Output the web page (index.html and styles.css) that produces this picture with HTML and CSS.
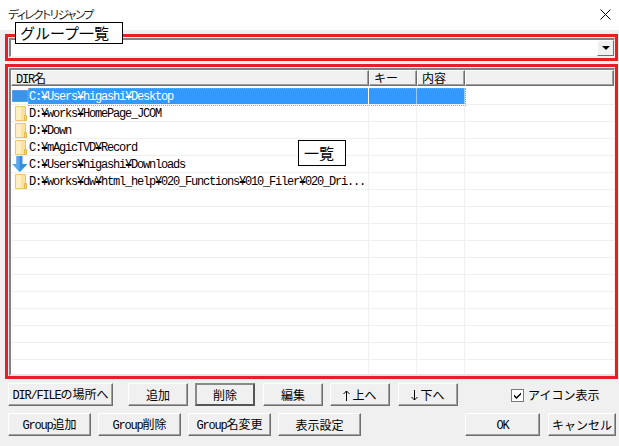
FILE: index.html
```html
<!DOCTYPE html>
<html lang="ja">
<head>
<meta charset="utf-8">
<title>ディレクトリジャンプ</title>
<link rel="stylesheet" href="styles.css">
</head>
<body>
<div class="dialog">
  <header class="titlebar">
    <span class="title">ディレクトリジャンプ</span>
    <svg class="close" width="11" height="11" viewBox="0 0 11 11"><path d="M.5.5l10 10M10.500.5l-10 10" stroke="#000" fill="none"/></svg>
  </header>
  <main class="content">
    <section class="redbox combo-box">
      <div class="combo">
        <span class="combo-btn"><i class="arrow"></i></span>
      </div>
    </section>
    <section class="redbox list-box">
      <div class="list">
        <div class="row head">
          <div class="cell c1"><span class="m">DIR</span>名</div>
          <div class="cell c2">キー</div>
          <div class="cell c3">内容</div>
          <div class="cell c4"></div>
        </div>
        <div class="rows">
          <div class="row selected">
            <div class="cell c1"><svg class="ico" width="16" height="16" viewBox="0 0 16 16"><rect x=".5" y="2.500" width="15" height="11" fill="#3a93ef" stroke="#1d6fd0" stroke-dasharray="1 1"/></svg><span class="path">C:¥Users¥higashi¥Desktop</span></div>
            <div class="cell c2"></div><div class="cell c3"></div><div class="cell c4"></div>
          </div>
          <div class="row">
            <div class="cell c1"><svg class="ico" width="16" height="16" viewBox="0 0 16 16"><use href="#folder"/></svg><span class="path">D:¥works¥HomePage_JCOM</span></div>
            <div class="cell c2"></div><div class="cell c3"></div><div class="cell c4"></div>
          </div>
          <div class="row">
            <div class="cell c1"><svg class="ico" width="16" height="16" viewBox="0 0 16 16"><use href="#folder"/></svg><span class="path">D:¥Down</span></div>
            <div class="cell c2"></div><div class="cell c3"></div><div class="cell c4"></div>
          </div>
          <div class="row">
            <div class="cell c1"><svg class="ico" width="16" height="16" viewBox="0 0 16 16"><use href="#folder"/></svg><span class="path">C:¥mAgicTVD¥Record</span></div>
            <div class="cell c2"></div><div class="cell c3"></div><div class="cell c4"></div>
          </div>
          <div class="row">
            <div class="cell c1"><svg class="ico" width="16" height="16" viewBox="0 0 16 16"><path d="M4.500 0h6v8H15.500L8 16 .5 8h4z" fill="#3a8fdc"/><path d="M4.500 0h3v16L.5 8h4z" fill="#5aa9ec"/></svg><span class="path">C:¥Users¥higashi¥Downloads</span></div>
            <div class="cell c2"></div><div class="cell c3"></div><div class="cell c4"></div>
          </div>
          <div class="row">
            <div class="cell c1"><svg class="ico" width="16" height="16" viewBox="0 0 16 16"><use href="#folder"/></svg><span class="path">D:¥works¥dw¥html_help¥020_Functions¥010_Filer¥020_Dri...</span></div>
            <div class="cell c2"></div><div class="cell c3"></div><div class="cell c4"></div>
          </div>
          <div class="row"><div class="cell c1"></div><div class="cell c2"></div><div class="cell c3"></div><div class="cell c4"></div></div>
          <div class="row"><div class="cell c1"></div><div class="cell c2"></div><div class="cell c3"></div><div class="cell c4"></div></div>
          <div class="row"><div class="cell c1"></div><div class="cell c2"></div><div class="cell c3"></div><div class="cell c4"></div></div>
          <div class="row"><div class="cell c1"></div><div class="cell c2"></div><div class="cell c3"></div><div class="cell c4"></div></div>
          <div class="row"><div class="cell c1"></div><div class="cell c2"></div><div class="cell c3"></div><div class="cell c4"></div></div>
          <div class="row"><div class="cell c1"></div><div class="cell c2"></div><div class="cell c3"></div><div class="cell c4"></div></div>
          <div class="row"><div class="cell c1"></div><div class="cell c2"></div><div class="cell c3"></div><div class="cell c4"></div></div>
          <div class="row"><div class="cell c1"></div><div class="cell c2"></div><div class="cell c3"></div><div class="cell c4"></div></div>
          <div class="row"><div class="cell c1"></div><div class="cell c2"></div><div class="cell c3"></div><div class="cell c4"></div></div>
          <div class="row"><div class="cell c1"></div><div class="cell c2"></div><div class="cell c3"></div><div class="cell c4"></div></div>
          <div class="row short"><div class="cell c1"></div><div class="cell c2"></div><div class="cell c3"></div><div class="cell c4"></div></div>
        </div>
      </div>
      <span class="note note-list">一覧</span>
    </section>
    <span class="note note-group">グループ一覧</span>
    <div class="btn-row first">
      <button class="btn b1"><span class="m">DIR/FILE</span>の場所へ</button>
      <button class="btn b2">追加</button>
      <button class="btn b2 default">削除</button>
      <button class="btn b2">編集</button>
      <button class="btn b2"><svg class="ar" width="7" height="11" viewBox="0 0 7 11"><path d="M3.500 11V1M.5 4l3-3 3 3" stroke="#000" fill="none"/></svg>上へ</button>
      <button class="btn b2"><svg class="ar" width="7" height="11" viewBox="0 0 7 11"><path d="M3.500 0v10M.5 7l3 3 3-3" stroke="#000" fill="none"/></svg>下へ</button>
      <label class="check"><span class="box"><svg width="9" height="9" viewBox="0 0 9 9"><path d="M1 3.500l2.500 2.500L8 1.500v2L3.500 8 1 5.500z" fill="#000"/></svg></span>アイコン表示</label>
    </div>
    <div class="btn-row second">
      <button class="btn b3"><span class="m">Group</span>追加</button>
      <button class="btn b3"><span class="m">Group</span>削除</button>
      <button class="btn b3"><span class="m">Group</span>名変更</button>
      <button class="btn b3 b3-last">表示設定</button>
      <button class="btn ok"><span class="m">OK</span></button>
      <button class="btn cancel">キャンセル</button>
    </div>
  </main>
</div>
<svg class="defs" width="0" height="0">
  <symbol id="folder" viewBox="0 0 16 16">
    <path d="M3.500 1.500h10v14h-10z" fill="#fce29a" stroke="#e8c76e"/>
    <path d="M4 2h5v13H4z" fill="#fff0c4"/>
    <path d="M12.500 10.500h2v5h-2z" fill="#fcd772" stroke="#e3b94f"/>
  </symbol>
</svg>
</body>
</html>
```
FILE: styles.css
```css
* { box-sizing: border-box; }
html, body { margin: 0; padding: 0; }
body {
  width: 619px;
  height: 446px;
  overflow: hidden;
  background: #f0f0f0;
  font: 12px/16px "Noto Sans CJK JP", sans-serif;
  color: #000;
}
.dialog { display: flex; flex-direction: column; height: 446px; }
.titlebar {
  height: 30px;
  flex: none;
  background: #fff;
  display: flex;
  justify-content: space-between;
  align-items: flex-start;
  padding: 6px 8px 0 8px;
}
.title { font-size: 11.5px; line-height: 16px; color: #222; font-feature-settings: "palt"; letter-spacing: -1.3px; }
.close { margin-top: 3px; }
.content { position: relative; padding: 4px 1px 0 5px; flex: 1; }
.redbox { border: 3px solid #ed1c24; }
.combo-box { height: 27px; padding: 1px 0 1px 1px; }
.combo {
  height: 19px;
  background: #fff;
  border-style: solid;
  border-width: 2px 1px 1px 2px;
  border-color: #828282 #f0f0f0 #f0f0f0 #828282;
  display: flex;
  justify-content: flex-end;
}
.combo-btn {
  width: 17px;
  background: #f0f0f0;
  border: 1px solid;
  border-color: #fff #6e6e6e #6e6e6e #fff;
  display: flex;
  align-items: center;
  justify-content: center;
}
.arrow {
  width: 0;
  height: 0;
  border: 4px solid transparent;
  border-top: 4px solid #000;
  border-bottom: 0;
}
.list-box { position: relative; margin-top: 3px; height: 315px; padding: 1px 0 0 1px; }
.list {
  height: 308px;
  background: #fff;
  border: 2px solid #828282;
  border-right: 1px solid #f0f0f0;
  border-bottom-color: #e4e4e4;
  overflow: hidden;
}
.row { display: flex; height: 17px; border-bottom: 1px solid #f0f0f0; }
.row.short { height: 14px; border-bottom: 0; }
.cell { border-right: 1px solid #f0f0f0; height: 100%; }
.c1 { width: 358px; display: flex; align-items: center; white-space: nowrap; }
.c2, .c3 { width: 48px; }
.c4 { flex: 1; border-right: 0; }
.head {
  height: 16px;
  margin-bottom: 2px;
  background: #f0f0f0;
  border-bottom: 0;
}
.head .cell {
  border: 1px solid;
  border-color: #fff #6e6e6e #6e6e6e #fff;
  box-shadow: inset -1px -1px 0 #a0a0a0;
  padding: 0 4px;
  line-height: 14px;
}
.head .c1 { display: block; }
.m { font-family: "Liberation Mono", monospace; letter-spacing: -1.2px; }
.ar { margin-right: 2px; vertical-align: -1px; }
.ico { margin: 0 1px; flex: none; }
.path {
  font-family: "Liberation Mono", monospace;
  letter-spacing: -1.2px;
  line-height: 15px;
  margin-top: 2px;
}
.selected { position: relative; }
.selected .c2, .selected .c3 { background: #3399ff; border-right-color: #ffffff80; }
.selected .c1 { background: linear-gradient(to right, transparent 17px, #3399ff 17px); border-right-color: #ffffff80; }
.selected::after {
  content: "";
  position: absolute;
  left: 17px;
  top: 0;
  width: 436px;
  height: 16px;
  border: 1px dotted #e8963c;
}
.selected .path { color: #fff; }
.note {
  position: absolute;
  background: #fff;
  border: 1px solid #000;
  font-size: 15px;
  line-height: 19px;
  white-space: nowrap;
}
.note-group { left: 15px; top: -8px; width: 108px; height: 22px; padding: 0 0 0 4px; }
.note-list { left: 290px; top: 73px; width: 48px; height: 26px; padding: 2px 5px; }
.btn-row { display: flex; align-items: flex-start; padding-left: 3px; }
.first { margin-top: 4px; height: 23px; }
.second { margin-top: 7px; }
.btn {
  height: 23px;
  background: #f0f0f0;
  border: 1px solid;
  border-color: #fff #6e6e6e #6e6e6e #fff;
  box-shadow: inset -1px -1px 0 #a0a0a0;
  font: inherit;
  color: #000;
  padding: 0;
  text-align: center;
  white-space: nowrap;
}
.b1 { width: 105px; margin-right: 15px; }
.b2 { width: 60px; margin-right: 7px; }
.default { border: 2px solid; border-color: #8a8a8a #555 #555 #8a8a8a; box-shadow: none; margin-right: 8px; }
.b2:nth-child(5) { margin-right: 8px; }
.b3 { width: 83px; margin-right: 7px; }
.b3-last { margin-right: 104px; }
.ok { width: 75px; margin-right: 8px; }
.cancel { width: 68px; }
.check { margin-left: 46px; margin-top: 4px; display: flex; align-items: center; gap: 4px; line-height: 16px; }
.box {
  width: 13px;
  height: 13px;
  background: #fff;
  border: 1px solid #7a7a7a;
  display: flex;
  align-items: center;
  justify-content: center;
}
.defs { position: absolute; }
```
